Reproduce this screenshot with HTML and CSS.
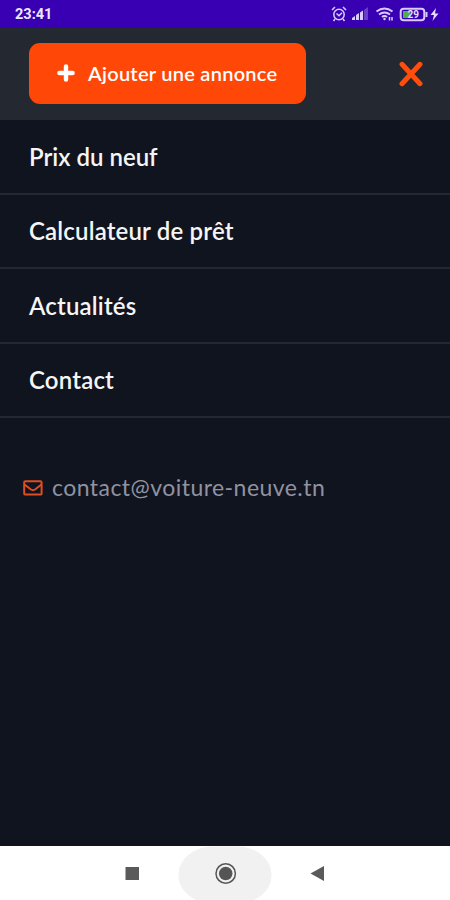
FILE: index.html
```
<!DOCTYPE html>
<html lang="fr">
<head>
<meta charset="utf-8">
<title>Menu</title>
<link rel="stylesheet" href="styles.css">
</head>
<body>
<div class="screen">
  <div class="status">
    <span class="time">23:41</span>
    <svg class="status-icons" width="110" height="18" viewBox="0 0 110 18" fill="none" stroke="#d8ccff" stroke-width="1.5">
      <circle cx="9" cy="9.5" r="5.2"/><path d="M2 5l3-3M16 5l-3-3M6.500 8.500L9 10.700l3-3M5 14l-1.500 2M13 14l1.500 2"/>
      <g fill="#d8ccff" stroke="none"><path d="M22 15v-2l3-2v4zM26 15v-5l3-2v7zM30 15V7.500l3-2V15z"/><path opacity=".3" d="M34 15V5l4-3v13z"/></g>
      <path stroke-width="2" d="M46.500 6.500q8-6 16 0M49 9.500q5.500-4 11 0M52 12q2.500-2 5 0"/><circle cx="54.500" cy="14" r="1.200" fill="#d8ccff" stroke="none"/><path d="M59.500 12v3.500M62 12v3.500"/>
      <rect x="70.700" y="3.700" width="23.600" height="11.600" rx="3" stroke-width="2"/><path fill="#52ad52" stroke="none" d="M73 6h7.500v7H73z"/><path d="M96.500 7v5" stroke-width="2"/>
      <text class="charge" x="77.500" y="13">29</text>
      <path fill="#e5ddff" stroke="none" d="M106 3l-5.500 7h3.500l-1.500 6 6-7.500h-3.500z"/>
    </svg>
  </div>
  <header class="header">
    <button class="add">
      <svg width="18" height="18" viewBox="0 0 18 18" stroke="#fff" stroke-width="4.400" stroke-linecap="round"><path d="M9 2.400v13.200M2.400 9h13.200"/></svg>
      <span>Ajouter une annonce</span>
    </button>
    <svg class="close" width="24" height="26" viewBox="0 0 24 26" stroke="#ff4d0c" stroke-width="5" stroke-linecap="round"><path d="M3 3.300l18 19.400M21 3.300L3 22.700"/></svg>
  </header>
  <nav class="menu">
    <a class="item"><span>Prix du neuf</span></a>
    <a class="item"><span class="wide">Calculateur de prêt</span></a>
    <a class="item"><span class="wide">Actualités</span></a>
    <a class="item"><span class="wide">Contact</span></a>
  </nav>
  <div class="mail">
    <svg width="20" height="16" viewBox="0 0 20 16" fill="none" stroke="#df4d22" stroke-width="2" stroke-linejoin="round"><rect x="1.200" y="1.200" width="17.400" height="13.400" rx="1.200"/><path d="M1.500 4.500l6.500 5q2 1.300 4 0l6.500-5"/></svg>
    <span>contact@voiture-neuve.tn</span>
  </div>
  <footer class="navbar">
    <svg width="450" height="54" viewBox="0 0 450 54">
      <rect x="178.500" y="0.500" width="93" height="57" rx="34" ry="28" fill="#f1f1f1"/>
      <rect x="125.500" y="21" width="13.500" height="13" fill="#5a5a5a"/>
      <circle cx="225.700" cy="27.500" r="9.700" fill="none" stroke="#555" stroke-width="1.500"/><circle cx="225.700" cy="27.500" r="6.800" fill="#555"/>
      <path d="M310.500 27.500L324 20v15z" fill="#5a5a5a"/>
    </svg>
  </footer>
</div>
</body>
</html>
```
FILE: styles.css
```
* { box-sizing: border-box; }
body { margin: 0; }
.screen {
  width: 450px; height: 900px; overflow: hidden;
  display: flex; flex-direction: column;
  background: #10141e; color: #f5f5f5;
  font-family: Lato, "Liberation Sans", sans-serif;
}
.status {
  height: 28px; flex: none; padding: 0 10px 0 15px;
  display: flex; align-items: center; justify-content: space-between;
  background: #3900b3;
}
.time { font: 700 14.5px/28px Roboto, sans-serif; color: #eee8ff; padding-top: 1px; }
.charge { font: 700 10px Roboto, sans-serif; fill: #e5ddff; stroke: none; }
.header {
  height: 92px; flex: none; padding: 0 27px 2px 29px;
  display: flex; align-items: center; justify-content: space-between;
  background: #242831;
}
.add {
  width: 277px; height: 61px; border: 0; border-radius: 11px; padding: 0 0 0 28px;
  display: flex; align-items: center; gap: 13px;
  background: #ff4807; color: #fff; font: 600 20px/26px Lato, sans-serif;
  white-space: nowrap; letter-spacing: .27px;
}
.close { margin-top: 2px; }
.menu { display: flex; flex-direction: column; }
.item {
  height: 74.5px; padding: 1px 29px 0; display: flex; align-items: center;
  border-bottom: 2px solid #242832;
  font-size: 24px; font-weight: 600; line-height: 30px; white-space: nowrap;
}
.wide { letter-spacing: .17px; }
.mail {
  margin-top: 54px; padding-left: 23px; height: 32px;
  display: flex; align-items: center; gap: 9px;
  color: #9092a0; font-size: 23px; line-height: 28px; letter-spacing: .45px; white-space: nowrap;
}
.mail span { padding-bottom: 2px; }
.navbar { margin-top: auto; height: 54px; flex: none; background: #fff; }
.navbar svg { display: block; }
```
